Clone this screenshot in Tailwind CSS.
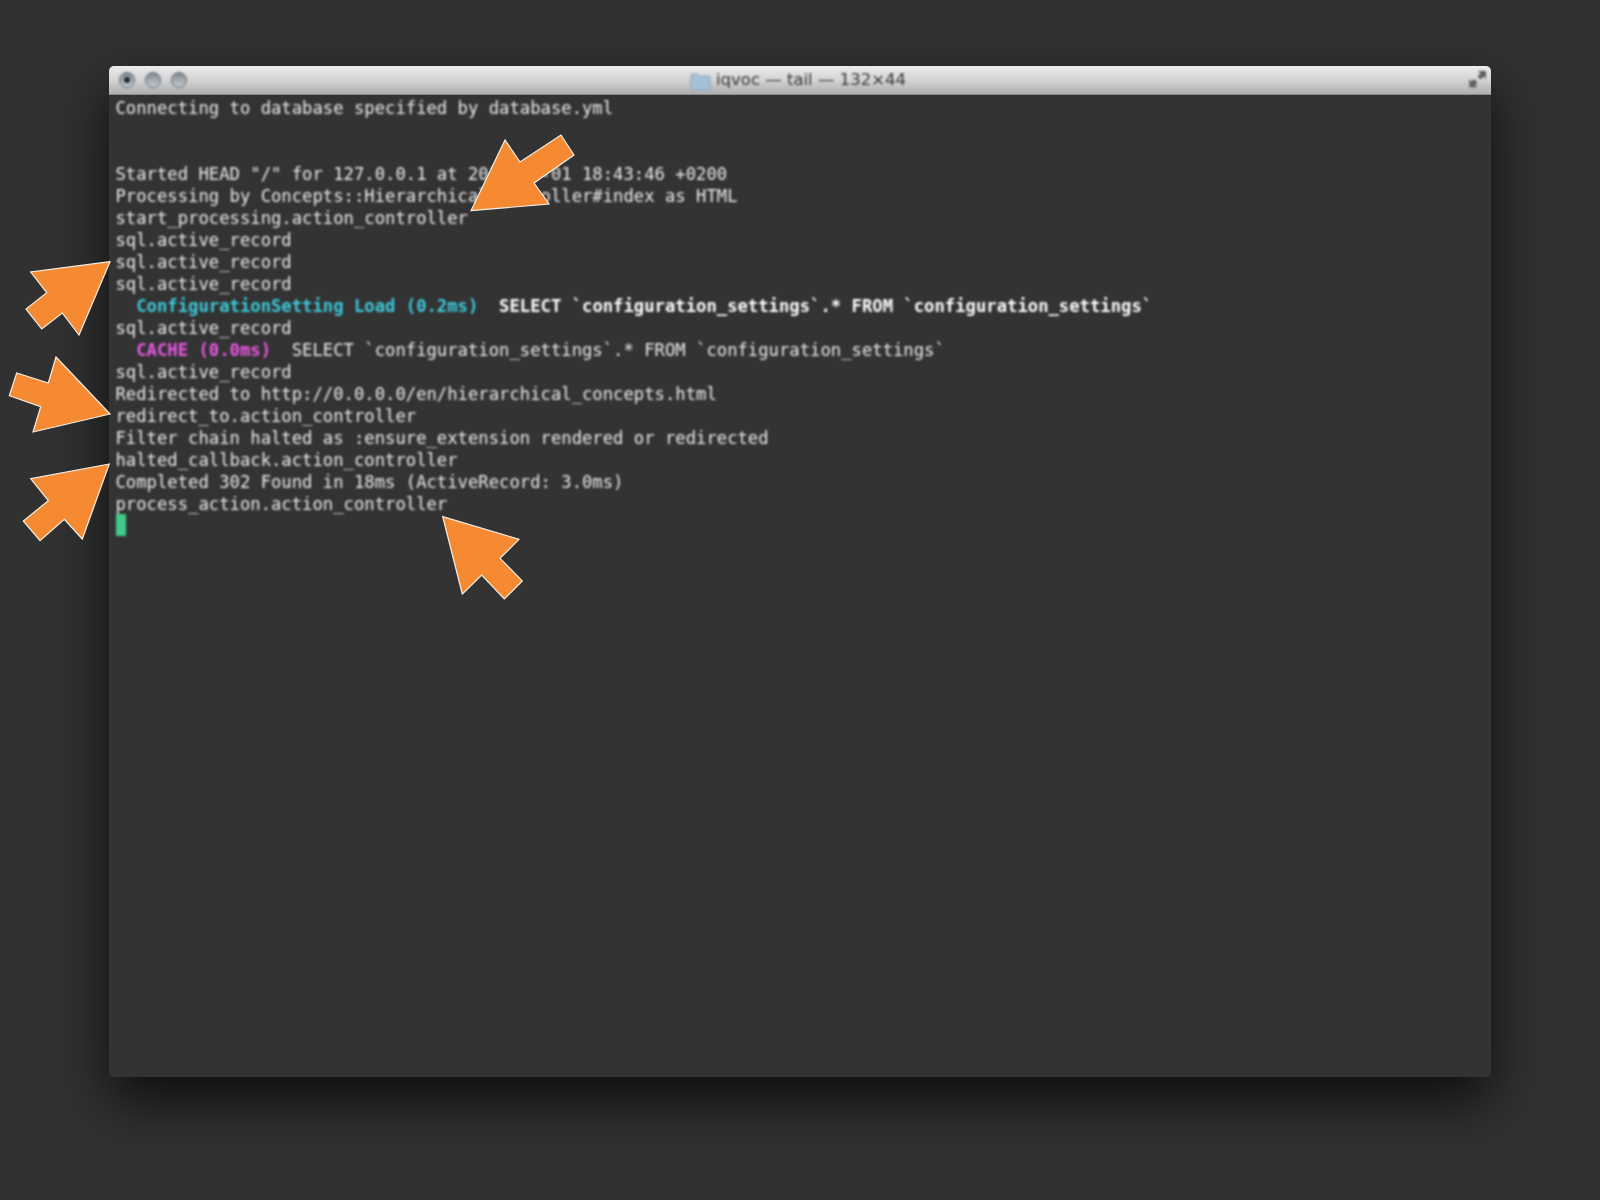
<!DOCTYPE html>
<html>
<head>
<meta charset="utf-8">
<script src="https://cdn.jsdelivr.net/npm/@tailwindcss/browser@4"></script>
</head>
<body class="bg-[#313131]">
<div class="relative w-[1600px] h-[1200px] overflow-hidden pt-[66px] pl-[109px]">
  <div class="flex flex-col w-[1382px] h-[1011px] rounded-[5px] bg-[#333333] shadow-[0_24px_55px_rgba(0,0,0,0.72)]">
    <div class="relative flex items-center justify-center shrink-0 h-[29px] pr-[4px] pt-[1px] rounded-t-[5px] border-b border-[#8a8a8a] bg-gradient-to-b from-[#ececec] via-[#d4d4d4] to-[#aeaeae] font-['DejaVu_Sans',sans-serif] text-[16.5px] text-[#333333]">
      <div class="absolute left-[10px] top-[6px] flex gap-[10px] blur-[0.8px]">
        <div class="flex items-center justify-center w-[16px] h-[16px] rounded-full border border-[#5f6872] bg-gradient-to-b from-[#7f8890] to-[#c6ced4]"><div class="w-[6px] h-[6px] rounded-full bg-[#1f2838]"></div></div>
        <div class="w-[16px] h-[16px] rounded-full border border-[#5f6872] bg-gradient-to-b from-[#7f8890] to-[#c6ced4]"></div>
        <div class="w-[16px] h-[16px] rounded-full border border-[#5f6872] bg-gradient-to-b from-[#7f8890] to-[#c6ced4]"></div>
      </div>
      <svg class="mr-[5px] blur-[0.8px]" width="21" height="20" viewBox="0 0 21 20"><path d="M1 4 a1 1 0 0 1 1-1 h5 l2 2 h10 a1 1 0 0 1 1 1 v12 a1 1 0 0 1-1 1 h-17 a1 1 0 0 1-1-1z" fill="#a6c0d6" stroke="#8aa6bd"/></svg>
      <span class="blur-[0.8px]">iqvoc — tail — 132×44</span>
      <svg class="absolute right-[3px] top-[3px] blur-[0.8px]" width="20" height="20" viewBox="0 0 20 20" fill="#5e5e5e"><path d="M10 2 h8 v8 l-2.500-2.500 l-3 3 l-3-3 l3-3z"/><path d="M1 10 l2.500 2.500 l2.500-2.500 l3.500 3.500 l-2.500 2.500 l2.500 2.500 h-8z"/></svg>
    </div>
    <div class="relative flex-1 flex flex-col pt-[2px] pl-[6.500px] font-['DejaVu_Sans_Mono',monospace] text-[17.23px] leading-[22px] text-[#ececec] whitespace-pre blur-[0.8px]">
      <div>Connecting to database specified by database.yml</div>
      <div>&nbsp;</div>
      <div>&nbsp;</div>
      <div>Started HEAD "/" for 127.0.0.1 at 2012-08-01 18:43:46 +0200</div>
      <div>Processing by Concepts::HierarchicalController#index as HTML</div>
      <div>start_processing.action_controller</div>
      <div>sql.active_record</div>
      <div>sql.active_record</div>
      <div>sql.active_record</div>
      <div class="font-bold text-white">  <span class="text-[#3ccbdc]">ConfigurationSetting Load (0.2ms)</span>  SELECT `configuration_settings`.* FROM `configuration_settings`</div>
      <div>sql.active_record</div>
      <div>  <span class="font-bold text-[#ec58e4]">CACHE (0.0ms)</span>  SELECT `configuration_settings`.* FROM `configuration_settings`</div>
      <div>sql.active_record</div>
      <div>Redirected to http://0.0.0.0/en/hierarchical_concepts.html</div>
      <div>redirect_to.action_controller</div>
      <div>Filter chain halted as :ensure_extension rendered or redirected</div>
      <div>halted_callback.action_controller</div>
      <div>Completed 302 Found in 18ms (ActiveRecord: 3.0ms)</div>
      <div>process_action.action_controller</div>
      <div class="w-[10.500px] h-[22px] -mt-[1.500px] bg-[#3fc98c]"></div>
    </div>
  </div>
  <svg class="absolute left-0 top-0" width="1600" height="1200" viewBox="0 0 1600 1200" fill="#f58a32" stroke="#f4efe6" stroke-width="1.200" stroke-linejoin="miter">
    <polygon points="471,210.700 549,204 534,183 574,155 561,135 520,162 505,140"/>
    <polygon points="110,261.700 30.700,272 46.700,292.700 26,309 41.700,329 62.300,313 79,335"/>
    <polygon points="110,414 33,432 40.700,406.700 9.300,395.700 16.700,373 48.300,383 56,357"/>
    <polygon points="109.300,464 30.700,478.700 48.300,500.700 23.300,521 40,540.700 64.300,519.300 82.300,539"/>
    <polygon points="442.700,516.700 519,539.300 500,558.300 522.300,581 504.300,599 481.700,575 462.300,594"/>
  </svg>
</div>
</body>
</html>
